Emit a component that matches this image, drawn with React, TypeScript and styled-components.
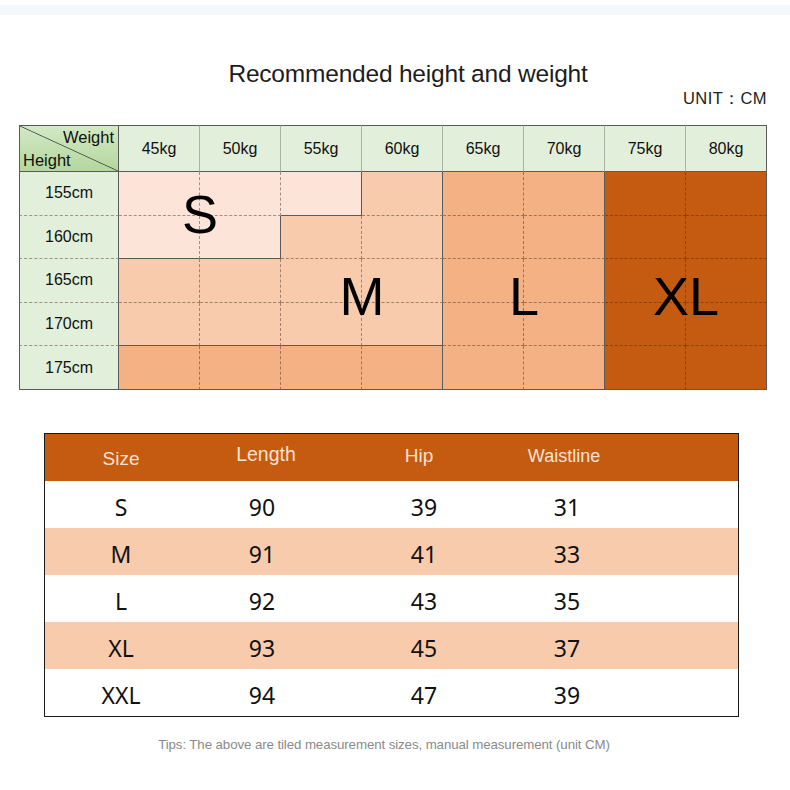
import React from "react";
import styled, { createGlobalStyle } from "styled-components";

const Global = createGlobalStyle`
  html, body { margin: 0; padding: 0; background: #ffffff; }
  body { font-family: "Liberation Sans", Arial, sans-serif; }
`;

const Page = styled.div`
  width: 790px;
  height: 790px;
  background: #ffffff;
  display: flex;
  flex-direction: column;
  overflow: hidden;
`;

const Stripe = styled.div`
  margin-top: 5px;
  height: 10px;
  background: #f3f8fd;
`;

const Title = styled.h1`
  margin: 45px 0 0 0;
  padding-left: 26px;
  text-align: center;
  font-family: "Liberation Sans", Arial, sans-serif;
  font-weight: normal;
  font-size: 24.5px;
  line-height: 28px;
  color: #1c1c1c;
  letter-spacing: -0.2px;
`;

const Unit = styled.div`
  margin-top: 1px;
  padding-right: 23px;
  text-align: right;
  font-size: 16.5px;
  line-height: 18px;
  color: #222;
  letter-spacing: 0.4px;
`;

const Grid = styled.div`
  position: relative;
  margin: 18px 0 0 19px;
  width: 748px;
  display: grid;
  grid-template-columns: 100px repeat(8, 81px);
  grid-template-rows: 47px repeat(5, 43.6px);
`;

type Side = "solid" | "dashed" | "light" | "none";

const sideCss = (s: Side) =>
  s === "solid"
    ? "1px solid #5a5a5a"
    : s === "dashed"
    ? "1px dashed rgba(60, 40, 30, 0.45)"
    : s === "light"
    ? "1px solid #a9b3a4"
    : "none";

const Cell = styled.div<{
  $bg: string;
  $top: Side;
  $right: Side;
  $bottom: Side;
  $left: Side;
  $col: number;
  $row: number;
}>`
  box-sizing: border-box;
  grid-column: ${(p) => p.$col};
  grid-row: ${(p) => p.$row};
  background: ${(p) => p.$bg};
  border-top: ${(p) => sideCss(p.$top)};
  border-right: ${(p) => sideCss(p.$right)};
  border-bottom: ${(p) => sideCss(p.$bottom)};
  border-left: ${(p) => sideCss(p.$left)};
  display: flex;
  align-items: center;
  justify-content: center;
  font-size: 16px;
  color: #111;
`;

const Corner = styled.div`
  box-sizing: border-box;
  grid-column: 1;
  grid-row: 1;
  border: 1px solid #5a5a5a;
  background:
    linear-gradient(to bottom left, transparent calc(50% - 0.8px), #4a4a4a 50%, transparent calc(50% + 0.8px)),
    linear-gradient(#d3e9c6, #b3d79c);
  display: flex;
  flex-direction: column;
  justify-content: space-between;
  padding: 2px 4px 2px 3px;
  font-size: 16.5px;
  color: #111;
  line-height: 18px;
`;

const CornerTop = styled.span`
  align-self: flex-end;
`;

const CornerBottom = styled.span`
  align-self: flex-start;
`;

const BigLetter = styled.div<{ $col: string; $row: string; $lift: number }>`
  grid-column: ${(p) => p.$col};
  grid-row: ${(p) => p.$row};
  z-index: 2;
  pointer-events: none;
  display: flex;
  align-items: center;
  justify-content: center;
  font-family: "Liberation Sans", Arial, sans-serif;
  font-size: 54px;
  color: #000;
  padding-bottom: ${(p) => p.$lift}px;
`;

const SizeTable = styled.div`
  margin: 43px 0 0 44px;
  width: 695px;
  box-sizing: border-box;
  border: 1px solid #1a1a1a;
  display: flex;
  flex-direction: column;
`;

const Row = styled.div<{ $bg: string; $h: number }>`
  display: grid;
  grid-template-columns: 152px 130px 194px 92px 1fr;
  height: ${(p) => p.$h}px;
  background: ${(p) => p.$bg};
`;

const HeadCell = styled.div<{ $dx: number; $dy: number; $fs: number }>`
  display: flex;
  align-items: center;
  justify-content: center;
  font-family: "Liberation Sans", Arial, sans-serif;
  font-size: ${(p) => p.$fs}px;
  color: #fbe2d2;
  transform: translate(${(p) => p.$dx}px, ${(p) => p.$dy}px);
`;

const DataCell = styled.div`
  display: flex;
  align-items: center;
  justify-content: center;
  padding-top: 5px;
  font-family: "Noto Sans", "DejaVu Sans", sans-serif;
  font-size: 23px;
  color: #111;
`;

const Tips = styled.div`
  margin-top: 20px;
  text-align: center;
  padding-right: 22px;
  font-size: 13.3px;
  line-height: 15px;
  color: #8a8a8a;
  letter-spacing: -0.1px;
`;

const weights = ["45kg", "50kg", "55kg", "60kg", "65kg", "70kg", "75kg", "80kg"];
const heights = ["155cm", "160cm", "165cm", "170cm", "175cm"];

const regions = [
  ["S", "S", "S", "M", "L", "L", "X", "X"],
  ["S", "S", "M", "M", "L", "L", "X", "X"],
  ["M", "M", "M", "M", "L", "L", "X", "X"],
  ["M", "M", "M", "M", "L", "L", "X", "X"],
  ["B", "B", "B", "B", "L", "L", "X", "X"],
];

const colors: Record<string, string> = {
  S: "#fde4d8",
  M: "#f8cbad",
  L: "#f4b183",
  B: "#f4b183",
  X: "#c55a11",
};

const HEAD_GREEN = "#e2efda";

const sizeRows = [
  ["S", "90", "39", "31"],
  ["M", "91", "41", "33"],
  ["L", "92", "43", "35"],
  ["XL", "93", "45", "37"],
  ["XXL", "94", "47", "39"],
];

export default function App() {
  const cells: React.ReactNode[] = [];

  weights.forEach((w, i) => {
    cells.push(
      <Cell
        key={`h-${w}`}
        $bg={HEAD_GREEN}
        $col={i + 2}
        $row={1}
        $top="solid"
        $right={i === 7 ? "solid" : "light"}
        $bottom="solid"
        $left="none"
      >
        {w}
      </Cell>
    );
  });

  heights.forEach((h, r) => {
    cells.push(
      <Cell
        key={`r-${h}`}
        $bg={HEAD_GREEN}
        $col={1}
        $row={r + 2}
        $top="none"
        $right="solid"
        $bottom={r === 4 ? "solid" : "dashed"}
        $left="solid"
      >
        {h}
      </Cell>
    );
    regions[r].forEach((reg, c) => {
      const rightReg = c < 7 ? regions[r][c + 1] : null;
      const downReg = r < 4 ? regions[r + 1][c] : null;
      cells.push(
        <Cell
          key={`c-${r}-${c}`}
          $bg={colors[reg]}
          $col={c + 2}
          $row={r + 2}
          $top="none"
          $left="none"
          $right={rightReg === null || rightReg !== reg ? "solid" : "dashed"}
          $bottom={downReg === null || downReg !== reg ? "solid" : "dashed"}
        />
      );
    });
  });

  return (
    <>
      <Global />
      <Page>
        <Stripe />
        <Title>Recommended height and weight</Title>
        <Unit>UNIT：CM</Unit>
        <Grid>
          <Corner>
            <CornerTop>Weight</CornerTop>
            <CornerBottom>Height</CornerBottom>
          </Corner>
          {cells}
          <BigLetter $col="2 / 4" $row="2 / 4" $lift={4}>S</BigLetter>
          <BigLetter $col="4 / 6" $row="4 / 6" $lift={14}>M</BigLetter>
          <BigLetter $col="6 / 8" $row="4 / 6" $lift={14}>L</BigLetter>
          <BigLetter $col="8 / 10" $row="4 / 6" $lift={14}>XL</BigLetter>
        </Grid>
        <SizeTable>
          <Row $bg="#c55a11" $h={47}>
            <HeadCell $dx={0} $dy={2} $fs={19}>Size</HeadCell>
            <HeadCell $dx={4} $dy={-3} $fs={19.5}>Length</HeadCell>
            <HeadCell $dx={-5} $dy={-1} $fs={19}>Hip</HeadCell>
            <HeadCell $dx={-3} $dy={-1} $fs={18}>Waistline</HeadCell>
          </Row>
          {sizeRows.map((r, i) => (
            <Row key={r[0]} $bg={i % 2 === 1 ? "#f8cbad" : "#ffffff"} $h={47}>
              {r.map((v, j) => (
                <DataCell key={j}>{v}</DataCell>
              ))}
            </Row>
          ))}
        </SizeTable>
        <Tips>Tips: The above are tiled measurement sizes, manual measurement (unit CM)</Tips>
      </Page>
    </>
  );
}
